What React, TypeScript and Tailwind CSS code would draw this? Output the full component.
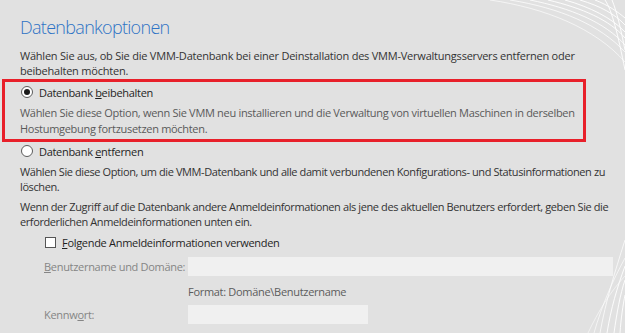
import React from 'react';

const font = { fontFamily: '"Open Sans", "Noto Sans", sans-serif' };

const Radio: React.FC<{ checked?: boolean }> = ({ checked }) => (
  <span className="flex h-[12px] w-[12px] shrink-0 items-center justify-center rounded-full border border-[#5c5c5c] bg-white">
    {checked && <span className="h-[6px] w-[6px] rounded-full bg-[#1a1a1a]" />}
  </span>
);

const Decoration: React.FC = () => (
  <svg className="pointer-events-none absolute inset-0" width="625" height="333" viewBox="0 0 625 333">
    <g fill="none" stroke="#ffffff" strokeWidth="0.9">
      <path d="M490 0 C 545 8, 595 28, 625 62" opacity="0.7" />
      <path d="M510 0 C 560 8, 600 25, 625 52" opacity="0.8" />
      <path d="M530 0 C 570 8, 605 22, 625 45" opacity="0.9" />
      <path d="M548 0 C 582 8, 610 20, 625 38" />
      <path d="M565 0 C 590 7, 612 18, 625 32" />
      <path d="M580 0 C 600 6, 615 14, 625 25" />
      <path d="M595 0 C 608 5, 618 12, 625 18" />
      <path d="M605 0 C 612 10, 618 35, 625 70" />
      <path d="M612 0 C 617 12, 621 30, 625 50" />
      <path d="M600 333 C 606 300, 614 275, 625 240" opacity="0.8" />
      <path d="M594 333 C 602 305, 612 282, 625 258" opacity="0.7" />
      <path d="M607 333 C 611 308, 617 288, 625 266" />
      <path d="M614 333 C 617 312, 620 295, 625 280" />
      <path d="M588 333 C 598 312, 610 292, 625 276" opacity="0.6" />
      <path d="M620 333 C 621 318, 623 305, 625 295" />
    </g>
  </svg>
);

export default function App() {
  return (
    <div className="relative h-[333px] w-[625px] overflow-hidden bg-[#e1e1e1] text-[11px] leading-[15px] tracking-[-0.3px] text-[#333333]" style={font}>
      <Decoration />
      <div className="relative">
        <h1 className="pl-[20px] pt-[15px] text-[18px] font-light leading-[24px] tracking-[-0.7px] text-[#2e73c5]">Datenbankoptionen</h1>
        <p className="mt-[9px] whitespace-nowrap pl-[20px] tracking-[-0.22px]">
          Wählen Sie aus, ob Sie die VMM-Datenbank bei einer Deinstallation des VMM-Verwaltungsservers entfernen oder
          <br />
          beibehalten möchten.
        </p>

        <div className="mt-[1px] ml-[2px] w-[584px] border-[3px] border-[#e8202a] pb-[2px]">
          <div className="flex h-[20px] items-center gap-[6px] pl-[16px]">
            <Radio checked />
            <span className="text-[#1f1f1f]">Datenbank <u>b</u>eibehalten</span>
          </div>
          <p className="mt-[3px] whitespace-nowrap pl-[15px] leading-[16px] text-[#5a5a5a]">
            Wählen Sie diese Option, wenn Sie VMM neu installieren und die Verwaltung von virtuellen Maschinen in derselben
            <br />
            Hostumgebung fortzusetzen möchten.
          </p>
        </div>

        <div className="mt-[1px] flex h-[16px] items-center gap-[6px] pl-[21px]">
          <Radio />
          <span className="text-[#1f1f1f]">Datenbank <u>e</u>ntfernen</span>
        </div>
        <p className="mt-[5px] whitespace-nowrap pl-[20px] tracking-[-0.4px]">
          Wählen Sie diese Option, um die VMM-Datenbank und alle damit verbundenen Konfigurations- und Statusinformationen zu
          <br />
          löschen.
        </p>
        <p className="mt-[5px] whitespace-nowrap pl-[20px] tracking-[-0.4px]">
          Wenn der Zugriff auf die Datenbank andere Anmeldeinformationen als jene des aktuellen Benutzers erfordert, geben Sie die
          <br />
          erforderlichen Anmeldeinformationen unten ein.
        </p>

        <div className="mt-[6px] flex h-[15px] items-center gap-[6px] pl-[45px]">
          <span className="h-[11px] w-[11px] shrink-0 border border-[#555555] bg-white" />
          <span className="text-[#1f1f1f]"><u>F</u>olgende Anmeldeinformationen verwenden</span>
        </div>

        <div className="mt-[7px] flex items-center pl-[44px]">
          <span className="w-[144px] whitespace-nowrap text-[#858585]"><u>B</u>enutzername und Domäne:</span>
          <div className="h-[19px] w-[425px] bg-[#f0f0f0]" />
        </div>
        <div className="mt-[8px] pl-[188px] text-[#5c5c5c]">Format: Domäne\Benutzername</div>
        <div className="mt-[6px] flex items-center pl-[44px]">
          <span className="w-[144px] whitespace-nowrap text-[#858585]">Kennw<u>o</u>rt:</span>
          <div className="h-[19px] w-[180px] bg-[#f0f0f0]" />
        </div>
      </div>
    </div>
  );
}
